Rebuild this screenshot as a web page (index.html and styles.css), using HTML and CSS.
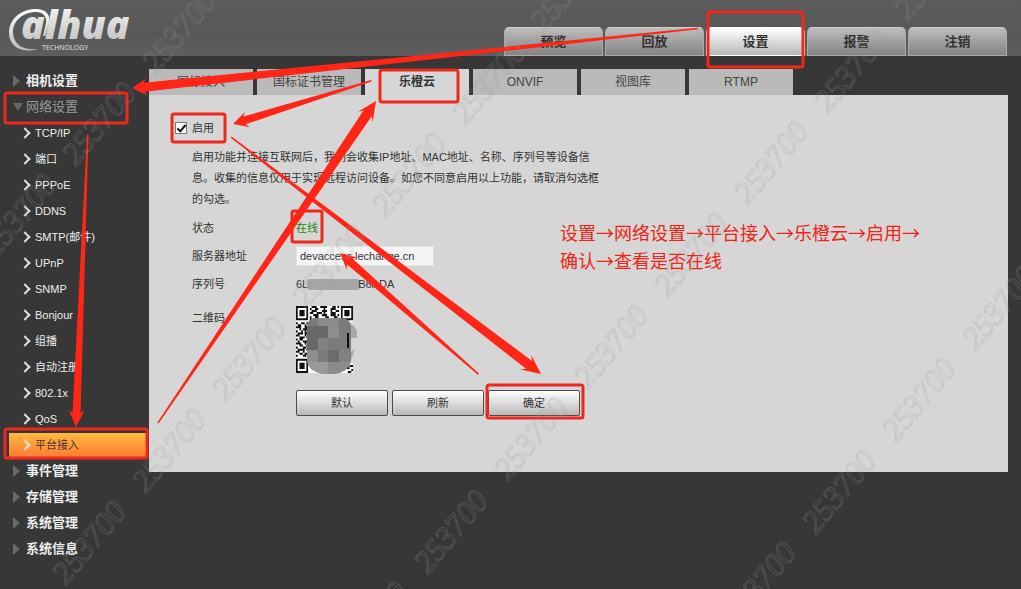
FILE: index.html
```
<!DOCTYPE html>
<html lang="zh-CN">
<head>
<meta charset="utf-8">
<title>平台接入</title>
<link rel="stylesheet" href="styles.css">
</head>
<body>
<header class="header">
  <svg class="logo" width="128" height="48" viewBox="0 0 128 48" role="img" aria-label="alhua technology">
    <defs>
      <linearGradient id="silver" x1="0" y1="0" x2="0" y2="1">
        <stop offset="0" stop-color="#fff"/><stop offset="1" stop-color="#b9b9b9"/>
      </linearGradient>
    </defs>
    <path fill="url(#silver)" d="M29 41C14 46 0 39 0 25 0 11 12 1 27 1c9 0 15 5 13 14l-4 13h-2l3-13C38 8 34 4 27 4 14 4 4 13 4 24c0 12 10 19 25 17z"/>
    <text class="logo-name" x="12" y="31" fill="url(#silver)">alhua</text>
    <text class="logo-sub" x="33" y="42">TECHNOLOGY</text>
  </svg>
  <nav class="main-nav">
    <button type="button">预览</button>
    <button type="button">回放</button>
    <button type="button" class="current">设置</button>
    <button type="button">报警</button>
    <button type="button">注销</button>
  </nav>
</header>
<div class="layout">
  <nav class="sidebar">
    <a class="group" href="#">相机设置</a>
    <a class="group open" href="#">网络设置</a>
    <a class="item" href="#">TCP/IP</a>
    <a class="item" href="#">端口</a>
    <a class="item" href="#">PPPoE</a>
    <a class="item" href="#">DDNS</a>
    <a class="item" href="#">SMTP(邮件)</a>
    <a class="item" href="#">UPnP</a>
    <a class="item" href="#">SNMP</a>
    <a class="item" href="#">Bonjour</a>
    <a class="item" href="#">组播</a>
    <a class="item" href="#">自动注册</a>
    <a class="item" href="#">802.1x</a>
    <a class="item" href="#">QoS</a>
    <a class="item active" href="#">平台接入</a>
    <a class="group" href="#">事件管理</a>
    <a class="group" href="#">存储管理</a>
    <a class="group" href="#">系统管理</a>
    <a class="group" href="#">系统信息</a>
  </nav>
  <main class="content">
    <div class="tabs">
      <button type="button">国标接入</button>
      <button type="button">国标证书管理</button>
      <button type="button" class="current">乐橙云</button>
      <button type="button">ONVIF</button>
      <button type="button">视图库</button>
      <button type="button">RTMP</button>
    </div>
    <form class="panel">
      <div class="enable">
        <input type="checkbox" id="enable" checked>
        <label for="enable">启用</label>
      </div>
      <p class="notice">启用功能并连接互联网后，我们会收集IP地址、MAC地址、名称、序列号等设备信<br>息。收集的信息仅用于实现远程访问设备。如您不同意启用以上功能，请取消勾选框<br>的勾选。</p>
      <div class="row"><span class="name">状态</span><span class="online">在线</span></div>
      <div class="row"><label class="name" for="server">服务器地址</label><input class="server" id="server" type="text" value="devaccess.lechange.cn"></div>
      <div class="row"><span class="name">序列号</span><span class="serial">6L<i class="smudge"></i>B6ADA</span></div>
      <div class="row code"><span class="name">二维码</span>
        <svg width="62" height="70" viewBox="0 0 62 70" role="img" aria-label="二维码">
          <svg width="57" height="67" viewBox="0 0 33 33" preserveAspectRatio="none">
            <path fill="#fff" d="M0 0h33v33H0z"/>
            <path fill="#111" fill-rule="evenodd" d="M0 0h7v7H0zM1 1v5h5V1zM2 2h3v3H2zM26 0h7v7h-7zM27 1v5h5V1zM28 2h3v3h-3zM0 26h7v7H0zM1 27v5h5v-5zM2 28h3v3H2z"/>
            <path stroke="#111" fill="none" d="M9 .5h3m2 0h4m3 0h2m1 0h1M8 1.5h1m2 0h2m3 0h1m3 0h3M9 2.5h3m3 0h3m2 0h1m2 0h2M8 3.5h2m2 0h3m1 0h1m3 0h3M10 4.5h3m2 0h3m2 0h3m1 0h1M8 5.5h1m2 0h2m4 0h2m3 0h2M8 6.5h1m1 0h1m1 0h1m1 0h1m1 0h1m1 0h1m1 0h1M0 8.5h1m2 0h2m1 0h3M1 9.5h2m2 0h1m2 0h1M0 10.5h3m2 0h2M2 11.5h1m1 0h3M0 12.5h1m2 0h1m1 0h1M1 13.5h3m1 0h2M0 14.5h2m3 0h1M2 15.5h3m1 0h1M0 16.5h1m1 0h2M1 17.5h1m2 0h3M0 18.5h3m2 0h1M2 19.5h2m2 0h1M0 20.5h1m3 0h2M1 21.5h4m1 0h1M0 22.5h2m2 0h1M2 23.5h2m1 0h2M0 24.5h1m3 0h2M31 29.5h2M29 30.5h2M32 31.5h1M30 32.5h2"/>
            <path fill="#d6d6d6" d="M30 8h3v14h-3zM31 22h2v6h-2z"/>
          </svg>
          <path fill="#aaa" d="M54 18l4 2 3 5v7h-7zM54 47l4-4-1 6-3 6z"/>
          <clipPath id="blob"><path d="M11 21q0-9 10-9h23q11 0 11 9v33q-2 14-22 14-20 0-22-14z"/></clipPath>
          <g clip-path="url(#blob)">
            <path fill="#7b7b7b" d="M10 11h46v58H10z"/>
            <path fill="#8b8b8b" d="M22 11h21v10H22z"/>
            <path fill="#686868" d="M10 20h22v12H10zM10 32h12v12H10z"/>
            <path fill="#8e8e8e" d="M32 20h11v12H32zM10 44h12v12H10z"/>
            <path fill="#828282" d="M22 32h10v12H22zM43 44h12v12H43z"/>
            <path fill="#6c6c6c" d="M32 44h11v12H32z"/>
            <path fill="#999" d="M10 56h22v14H10z"/>
            <path fill="#8b8b8b" d="M32 56h23v14H32z"/>
          </g>
          <path stroke="#111" stroke-width="2" d="M52 27v15"/>
        </svg>
      </div>
      <div class="actions">
        <button type="button">默认</button>
        <button type="button">刷新</button>
        <button type="submit">确定</button>
      </div>
    </form>
  </main>
</div>
<p class="steps">设置→网络设置→平台接入→乐橙云→启用→<br>确认→查看是否在线</p>
<svg class="overlay" width="1021" height="589" viewBox="0 0 1021 589" aria-hidden="true">
  <g class="boxes">
    <rect x="708" y="12" width="95" height="55" rx="2"/>
    <rect x="5" y="93" width="122" height="30" rx="2"/>
    <rect x="172" y="114" width="53" height="28" rx="2"/>
    <rect x="380" y="70" width="78" height="32" rx="2"/>
    <rect x="292" y="211" width="30" height="31" rx="2"/>
    <rect x="487" y="385" width="96" height="33" rx="2"/>
    <rect x="5" y="429" width="142" height="29" rx="2"/>
  </g>
  <g fill="#ff2617">
    <path transform="translate(132 88) rotate(-6)" d="M0 0L15-8 12-4 569-.8V.8L12 5 15 9z"/>
    <path transform="translate(233 124) rotate(-17.4)" d="M0 0L15-8 12-4 145-.8V.8L12 4 15 8z"/>
    <path transform="translate(541 374) rotate(217.4)" d="M0 0L19-9 15-5 390-.8V.8L15 5 19 9z"/>
    <path transform="translate(376 101) rotate(124.1)" d="M0 0L19-9 15-5 389-.8V.8L15 5 19 9z"/>
    <path transform="translate(340 253) rotate(41.2)" d="M0 0L16-8 13-4 184-.8V.8L13 4 16 8z"/>
    <path transform="translate(76 427) rotate(-87.7)" d="M0 0L17-8 14-4 293-.8V.8L14 4 17 8z"/>
  </g>
  <g class="marks">
    <text transform="translate(-4 259) rotate(-50)">253700</text>
    <text transform="translate(76 167) rotate(-50)">253700</text>
    <text transform="translate(156 75) rotate(-50)">253700</text>
    <text transform="translate(66 586) rotate(-50)">253700</text>
    <text transform="translate(146 494) rotate(-50)">253700</text>
    <text transform="translate(226 402) rotate(-50)">253700</text>
    <text transform="translate(306 310) rotate(-50)">253700</text>
    <text transform="translate(386 218) rotate(-50)">253700</text>
    <text transform="translate(466 126) rotate(-50)">253700</text>
    <text transform="translate(544 34) rotate(-50)">253700</text>
    <text transform="translate(348 667) rotate(-50)">253700</text>
    <text transform="translate(428 575) rotate(-50)">253700</text>
    <text transform="translate(508 482) rotate(-50)">253700</text>
    <text transform="translate(588 390) rotate(-50)">253700</text>
    <text transform="translate(668 298) rotate(-50)">253700</text>
    <text transform="translate(748 206) rotate(-50)">253700</text>
    <text transform="translate(828 114) rotate(-50)">253700</text>
    <text transform="translate(908 22) rotate(-50)">253700</text>
    <text transform="translate(736 627) rotate(-50)">253700</text>
    <text transform="translate(816 535) rotate(-50)">253700</text>
    <text transform="translate(896 443) rotate(-50)">253700</text>
    <text transform="translate(976 351) rotate(-50)">253700</text>
  </g>
</svg>
</body>
</html>
```
FILE: styles.css
```
*, *::before { box-sizing: border-box; }

body {
  position: relative;
  margin: 0;
  min-height: 100vh;
  overflow-x: hidden;
  background: #373737;
  color: #333;
  font: 11px/20px "Liberation Sans", "Noto Sans CJK SC", sans-serif;
}

a { color: inherit; text-decoration: none; }

button, input { margin: 0; font: inherit; color: inherit; }

.header {
  display: flex;
  justify-content: space-between;
  align-items: flex-end;
  height: 56px;
  padding: 0 14px 0 9px;
  background: linear-gradient(#5c5c5c, #585858 60%, #5e5e5e);
}

.logo { align-self: flex-start; margin-top: 8px; overflow: visible; }
.logo-name { font: italic 800 39px "Open Sans", sans-serif; }
.logo-sub { font: 7px "Open Sans", sans-serif; fill: #e8e8e8; }

.main-nav { display: flex; gap: 2px; }

.main-nav button {
  width: 99px;
  height: 29px;
  padding: 0;
  border: 1px solid #aaa;
  border-top-color: #ccc;
  border-radius: 5px 5px 0 0;
  background: linear-gradient(#bdbdbd, #858383);
  font-size: 13px;
  font-weight: bold;
}

.main-nav .current {
  border-color: #fff;
  background: linear-gradient(#fff, #b9b7b7);
}

.layout { display: flex; align-items: flex-start; padding: 12px 13px 14px 0; }

.sidebar { flex: 0 0 149px; padding-left: 9px; color: #eee; }

.sidebar a { display: flex; align-items: center; height: 26px; }

.group { gap: 6px; padding-left: 4px; font-size: 13px; font-weight: bold; }

.group::before {
  content: "";
  border: solid transparent;
  border-width: 6px 0 6px 7px;
  border-left-color: #696969;
}

.group.open { gap: 3px; color: #999; font-weight: normal; }

.group.open::before {
  border-width: 8px 5px 0;
  border-color: #696962 transparent transparent;
}

.item { gap: 6px; padding-left: 12px; }

.item::before {
  content: "";
  width: 8px;
  height: 8px;
  border: solid #ddd;
  border-width: 2px 2px 0 0;
  transform: rotate(45deg);
}

.sidebar .active {
  height: 24px;
  margin: 1px 2px 1px 0;
  background: linear-gradient(#ffb83e, #ff7c34);
  color: #433;
}

.content { flex: 1; min-width: 0; padding-top: 1px; }

.tabs { display: flex; gap: 4px; }

.tabs button {
  width: 104px;
  height: 26px;
  padding: 0;
  border: 0;
  background: #bababa;
  font-size: 12px;
  color: #444;
}

.tabs .current { background: #d6d6d6; color: #333; font-weight: bold; }

.panel { padding: 20px 26px 56px; background: #d6d6d6; }

.enable { display: flex; align-items: center; gap: 5px; height: 26px; }

.enable input {
  appearance: none;
  width: 12px;
  height: 12px;
  border: 1px solid #777;
  background: #fff;
}

.enable input:checked::before {
  content: "";
  display: block;
  width: 5px;
  height: 9px;
  margin-left: 3px;
  border: solid #111;
  border-width: 0 2px 2px 0;
  transform: rotate(40deg);
}

.notice { margin: 6px 0 4px 17px; line-height: 21px; white-space: nowrap; }

.row { display: flex; align-items: center; height: 28px; padding-left: 17px; }

.name { flex: 0 0 104px; }

.online { color: #23870c; }

.server {
  width: 138px;
  height: 20px;
  padding: 0 3px;
  border: 1px solid #e2e2e2;
  background: #f4f4f4;
}

.serial { display: flex; align-items: center; }

.smudge {
  width: 53px;
  height: 11px;
  margin: 0 -2px 0 -1px;
  border-radius: 3px;
  background: #a6a6a6;
}

.code { align-items: flex-start; height: auto; padding-top: 8px; }
.code .name { line-height: 24px; }
.code svg { display: block; }

.actions { display: flex; gap: 4px; margin: 14px 0 0 121px; }

.actions button {
  width: 92px;
  height: 26px;
  padding: 0;
  border: 1px solid #4c4c4c;
  border-radius: 2px;
  background: linear-gradient(#fff, #bbb8b8);
}

.steps {
  position: absolute;
  left: 560px;
  top: 218px;
  margin: 0;
  color: #f02314;
  font: 18px/28px "Noto Sans CJK SC", sans-serif;
  white-space: nowrap;
}

.overlay {
  position: absolute;
  left: 0;
  top: 0;
  pointer-events: none;
}

.boxes { fill: none; stroke: #ee281c; stroke-width: 3; }

.marks {
  fill: none;
  stroke: #999;
  stroke-opacity: .28;
  stroke-width: 1;
  font: italic 32px "Liberation Serif", serif;
}
```
